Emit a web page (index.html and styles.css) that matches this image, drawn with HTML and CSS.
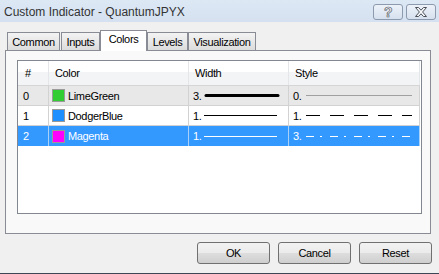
FILE: index.html
```html
<!DOCTYPE html>
<html lang="en">
<head>
  <meta charset="UTF-8">
  <title>Custom Indicator - QuantumJPYX</title>
  <link rel="stylesheet" href="styles.css">
</head>
<body>
  <div class="window">

    <!-- Title bar -->
    <div class="titlebar">
      <span class="title">Custom Indicator - QuantumJPYX</span>
      <div class="caption-buttons">
        <span class="cap-btn help">?</span>
        <span class="cap-btn close">
          <svg width="14" height="10" viewBox="0 0 14 10">
            <polygon points="1.5,0.5 4.5,0.5 7,3.2 9.5,0.5 12.5,0.5 8.6,5 12.5,9.5 9.5,9.5 7,6.8 4.5,9.5 1.5,9.5 5.4,5" fill="#f6f8fb" stroke="#4a4f57" stroke-width="1"/>
          </svg>
        </span>
      </div>
    </div>

    <!-- Tabs -->
    <div class="tabs">
      <div class="tab tab-common">Common</div>
      <div class="tab tab-inputs">Inputs</div>
      <div class="tab tab-colors active">Colors</div>
      <div class="tab tab-levels">Levels</div>
      <div class="tab tab-visual">Visualization</div>
    </div>

    <div class="tab-panel">
      <div class="list">
        <div class="list-row list-head">
          <div class="cell">#</div>
          <div class="cell">Color</div>
          <div class="cell">Width</div>
          <div class="cell">Style</div>
        </div>

        <div class="list-row row-hover">
          <div class="cell">0</div>
          <div class="cell"><span class="swatch lime"></span>LimeGreen</div>
          <div class="cell">3.
            <svg class="width-line" width="76" height="5"><line x1="2" y1="2.5" x2="74" y2="2.5" stroke="#000" stroke-width="3" stroke-linecap="round"/></svg>
          </div>
          <div class="cell">0.
            <svg class="style-line" width="106" height="3"><line x1="0" y1="1.5" x2="106" y2="1.5" stroke="#a0a0a0" stroke-width="1"/></svg>
          </div>
        </div>

        <div class="list-row">
          <div class="cell">1</div>
          <div class="cell"><span class="swatch dodger"></span>DodgerBlue</div>
          <div class="cell">1.
            <svg class="width-line" width="76" height="5"><line x1="0" y1="2.5" x2="73" y2="2.5" stroke="#000" stroke-width="1"/></svg>
          </div>
          <div class="cell">1.
            <svg class="style-line" width="106" height="3"><line x1="0" y1="1.5" x2="106" y2="1.5" stroke="#000" stroke-width="1" stroke-dasharray="14 10"/></svg>
          </div>
        </div>

        <div class="list-row selected">
          <div class="cell">2</div>
          <div class="cell"><span class="swatch magenta"></span>Magenta</div>
          <div class="cell">1.
            <svg class="width-line" width="76" height="5"><line x1="0" y1="2.5" x2="73" y2="2.5" stroke="#fff" stroke-width="1"/></svg>
          </div>
          <div class="cell">3.
            <svg class="style-line" width="106" height="3"><line x1="0" y1="1.5" x2="106" y2="1.5" stroke="#fff" stroke-width="1" stroke-dasharray="8 6 2 8"/></svg>
          </div>
        </div>
      </div>
    </div>

    <!-- Dialog buttons -->
    <div class="dialog-buttons">
      <button class="btn">OK</button>
      <button class="btn">Cancel</button>
      <button class="btn">Reset</button>
    </div>

  </div>
</body>
</html>
```

FILE: styles.css
```css
/* Reset */
* {
  margin: 0;
  padding: 0;
  box-sizing: border-box;
}

body {
  width: 439px;
  height: 274px;
  overflow: hidden;
  background-color: #f0f0f0;
  font-family: "Liberation Sans", Arial, sans-serif;
  font-size: 11px;
  letter-spacing: -0.35px;
  color: #000;
}

.window {
  height: 274px;
  display: flex;
  flex-direction: column;
  border-bottom: 1px solid #3d4654;
}

/* Title bar */
.titlebar {
  height: 22px;
  display: flex;
  justify-content: space-between;
  padding: 0 3px 0 4px;
  background: linear-gradient(#dde8f5, #d5e1f0);
}

.title {
  font-size: 12px;
  letter-spacing: 0;
  color: #333;
  line-height: 24px;
}

.caption-buttons {
  display: flex;
  gap: 3px;
  margin-top: 4px;
}

.cap-btn {
  width: 30px;
  height: 16px;
  border: 1px solid #8d99ad;
  border-radius: 3px;
  background: linear-gradient(#edf2f9, #d6e0ee);
  display: flex;
  align-items: center;
  justify-content: center;
}

.help {
  font-size: 14px;
  font-weight: bold;
  color: #f6f8fb;
  -webkit-text-stroke: 0.6px #4a4f57;
  line-height: 14px;
}

/* Tabs */
.tabs {
  display: flex;
  align-items: flex-end;
  height: 20px;
  margin-top: 8px;
  padding-left: 7px;
  position: relative;
  z-index: 1;
}

.tab {
  height: 18px;
  padding-top: 1px;
  line-height: 16px;
  text-align: center;
  border: 1px solid #898c95;
  border-bottom: none;
  background: linear-gradient(#f3f3f3, #e8e8e8 50%, #dcdcdc);
}

.tab-common { width: 53px; }
.tab-inputs { width: 39px; margin-left: 1px; }
.tab-colors { width: 47px; }
.tab-levels { width: 41px; }
.tab-visual { width: 68px; }

.tab.active {
  height: 21px;
  padding-top: 0;
  margin-bottom: -1px;
  background: #fff;
}

/* Tab page */
.tab-panel {
  margin-left: 5px;
  width: 426px;
  height: 184px;
  border: 1px solid #898c95;
  background-color: #f9f9f9;
  padding: 9px 8px 19px 11px;
}

.list {
  width: 405px;
  height: 154px;
  border: 1px solid #828790;
  background-color: #fff;
}

.list-row {
  display: grid;
  grid-template-columns: 31px 140px 100px 131px;
  height: 20px;
  border-bottom: 1px solid #d2d2d2;
  width: 402px;
}

.cell {
  display: flex;
  align-items: center;
  padding-left: 5px;
  border-right: 1px solid #d2d2d2;
  white-space: nowrap;
}

.cell:nth-child(3),
.cell:nth-child(4) {
  padding-left: 4px;
}

.list-head {
  height: 25px;
  border-bottom: 1px solid #d5d5d5;
  background: linear-gradient(#ffffff, #ffffff 45%, #f3f4f6 46%, #f3f4f6);
}

.list-head .cell {
  padding-left: 6px;
  border-right: 1px solid #e4e6ea;
}

.list-head .cell:first-child { padding-left: 7px; }
.list-head .cell:nth-child(3),
.list-head .cell:nth-child(4) { padding-left: 6px; }

.row-hover {
  background-color: #e8e8e8;
}

.selected {
  background-color: #3399ff;
  color: #fff;
  border-bottom: none;
}

.selected .cell {
  border-right-color: #a9d0f7;
}

.swatch {
  width: 13px;
  height: 13px;
  margin-left: -2px;
  margin-right: 3px;
  border: 1px solid #9a9a9a;
}

.lime { background-color: #32cd32; }
.dodger { background-color: #1e90ff; }
.magenta { background-color: #ff00ff; }

.width-line {
  margin-left: 3px;
}

.style-line {
  margin-left: 5px;
}

/* Bottom buttons */
.dialog-buttons {
  display: flex;
  justify-content: flex-end;
  gap: 8px;
  margin-top: 8px;
  padding-right: 7px;
}

.btn {
  width: 73px;
  height: 22px;
  border: 1px solid #707070;
  border-radius: 3px;
  background: linear-gradient(#f2f2f2, #ebebeb 50%, #dddddd 51%, #cfcfcf);
  font-family: "Liberation Sans", Arial, sans-serif;
  font-size: 11px;
  letter-spacing: -0.35px;
  color: #000;
}
```
